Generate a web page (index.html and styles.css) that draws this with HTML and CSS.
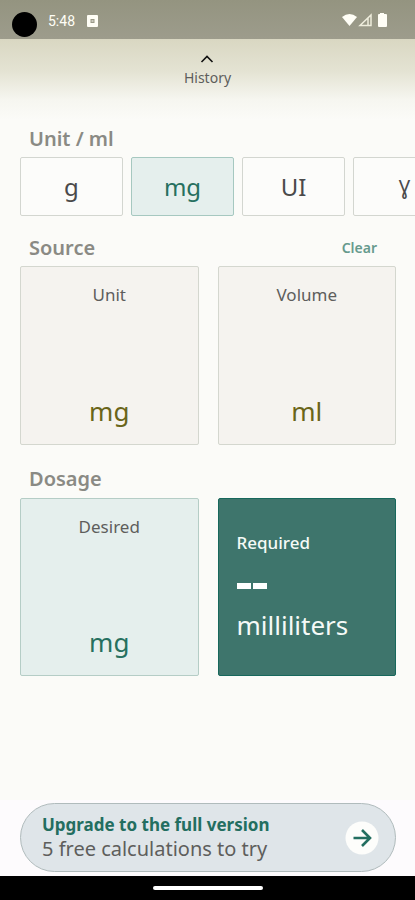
FILE: index.html
```html
<!DOCTYPE html>
<html lang="en">
<head>
<meta charset="utf-8">
<meta name="viewport" content="width=device-width, initial-scale=1">
<title>Dosage calculator</title>
<link rel="stylesheet" href="styles.css">
</head>
<body>
<div class="status">
  <span class="camera"></span>
  <span class="time">5:48</span>
  <svg class="notice" width="11" height="12" viewBox="0 0 11 12"><path fill="#fffef6" fill-rule="evenodd" d="M1 0h9a1 1 0 0 1 1 1v10a1 1 0 0 1-1 1H1a1 1 0 0 1-1-1V1a1 1 0 0 1 1-1zM3.500 4v4h4V4z"/><path fill="#fffef6" d="M4.500 5h2v2h-2z" opacity=".5"/></svg>
  <svg class="signals" width="46" height="15" viewBox="0 0 46 15"><path fill="#fffef6" d="M0 4Q7.500-2 15 4L7.500 13z"/><path fill="none" stroke="#eeeddc" stroke-width="1.500" d="M29 2v10.500H18zM26 5v7"/><path fill="#fffef6" d="M38 0h4v1h2q1 0 1 1v11q0 1-1 1h-7q-1 0-1-1V2q0-1 1-1h1z"/></svg>
</div>
<header class="header">
  <button class="history" type="button">
    <svg width="14" height="8" viewBox="0 0 14 8"><path fill="none" stroke="#111" stroke-width="1.600" d="M1.500 7 7 1.500 12.500 7"/></svg>
    <span>History</span>
  </button>
</header>
<main class="main">
  <section>
    <h2 class="title">Unit / ml</h2>
    <div class="chips">
      <button class="chip" type="button">g</button>
      <button class="chip selected" type="button" aria-pressed="true">mg</button>
      <button class="chip" type="button">UI</button>
      <button class="chip gamma" type="button">Ɣ</button>
    </div>
  </section>
  <section>
    <div class="title-row">
      <h2 class="title">Source</h2>
      <button class="clear" type="button">Clear</button>
    </div>
    <div class="cards">
      <button class="card" type="button"><span class="label">Unit</span><span class="unit">mg</span></button>
      <button class="card" type="button"><span class="label">Volume</span><span class="unit">ml</span></button>
    </div>
  </section>
  <section class="dosage">
    <h2 class="title">Dosage</h2>
    <div class="cards">
      <button class="card desired" type="button"><span class="label">Desired</span><span class="unit">mg</span></button>
      <div class="card required">
        <span class="required-label">Required</span>
        <span class="dashes" role="img" aria-label="No value"><i></i><i></i></span>
        <span class="required-unit">milliliters</span>
      </div>
    </div>
  </section>
</main>
<footer class="footer">
  <button class="upgrade" type="button">
    <span class="upgrade-text"><strong>Upgrade to the full version</strong><span>5 free calculations to try</span></span>
    <svg width="34" height="34" viewBox="0 0 34 34"><circle cx="17" cy="17" r="16.500" fill="#fdfdfb"/><path fill="none" stroke="#236e60" stroke-width="2.600" d="M8.500 17h16M17 9l8 8-8 8"/></svg>
  </button>
</footer>
<nav class="navbar"><span></span></nav>
</body>
</html>
```
FILE: styles.css
```css
* { box-sizing: border-box; }

body {
  margin: 0;
  min-height: 100vh;
  display: flex;
  flex-direction: column;
  overflow-x: hidden;
  background: #fbfbf8;
  color: #5e5e5c;
  font-family: "Noto Sans", sans-serif;
}

button {
  margin: 0;
  padding: 0;
  border: 0;
  background: none;
  color: inherit;
  font: inherit;
}

.status {
  height: 39px;
  display: flex;
  align-items: center;
  padding: 2px 27px 0 12px;
  background: linear-gradient(#949480, #9d9c8c);
}

.camera {
  width: 25px;
  height: 25px;
  margin: 8px 11px 0 0;
  border-radius: 50%;
  background: #000;
}

.time {
  margin-right: 12px;
  color: #fffef6;
  font: 14px/16px Roboto, sans-serif;
}

.signals { margin-left: auto; }

.header {
  height: 81px;
  display: flex;
  justify-content: center;
  align-items: flex-start;
  padding-top: 16px;
  background: linear-gradient(#d9d7c2, #e4e3d3 40%, #f6f6f0 75%, #fbfbf8);
}

.history {
  display: flex;
  flex-direction: column;
  align-items: center;
  gap: 7px;
  font-size: 14px;
  line-height: 16px;
}

.main {
  flex: 1;
  padding: 7px 19px 24px 20px;
}

.title {
  margin: 0;
  padding-left: 9px;
  color: #8a8a84;
  font-size: 20px;
  font-weight: 600;
  line-height: 24px;
}

.title-row {
  display: flex;
  justify-content: space-between;
  align-items: center;
  padding: 20px 19px 6px 0;
}

.clear {
  color: #669a8d;
  font-size: 14px;
  font-weight: 600;
  line-height: 20px;
}

.chips {
  display: flex;
  gap: 8px;
  margin: 6px -19px 0 0;
  overflow: hidden;
}

.chip {
  flex: 0 0 103px;
  height: 59px;
  border: 1px solid #d3d6d0;
  border-radius: 2px;
  background: #fcfcfa;
  color: #4a4a4a;
  font-size: 24px;
  line-height: 32px;
}

.chip.gamma { font-size: 20px; }

.chip.selected {
  border-color: #a6c8c0;
  background: #e5efed;
  color: #26705f;
}

.cards {
  display: grid;
  grid-template-columns: 1fr 1fr;
  gap: 19px;
}

.card {
  aspect-ratio: 1;
  display: flex;
  flex-direction: column;
  justify-content: space-between;
  align-items: center;
  padding: 16px 16px 15px;
  border: 1px solid #d4d7cf;
  border-radius: 2px;
  background: #f5f3ef;
}

.label {
  font-size: 17px;
  line-height: 24px;
}

.unit {
  color: #6a6519;
  font-size: 26px;
  line-height: 36px;
}

.dosage { padding-top: 22px; }
.dosage .cards { margin-top: 7px; }

.desired {
  border-color: #b5cdc6;
  background: #e5efed;
}

.desired .unit { color: #26705f; }

.required {
  justify-content: flex-start;
  align-items: flex-start;
  padding: 32px 18px;
  border-color: #17685c;
  background: #3e756c;
  color: #f5faf7;
}

.required-label {
  font-size: 17px;
  font-weight: 500;
  line-height: 24px;
}

.dashes {
  display: flex;
  gap: 2px;
  margin: 28px 0 18px;
}

.dashes i {
  width: 14px;
  height: 6px;
  background: #fff;
}

.required-unit {
  font-size: 26px;
  line-height: 36px;
}

.footer {
  padding: 3px 19px 4px 20px;
  background: #fdfbfd;
}

.upgrade {
  width: 100%;
  height: 69px;
  display: flex;
  justify-content: space-between;
  align-items: center;
  padding: 0 16px 0 21px;
  border: 1px solid #b0bbbc;
  border-radius: 35px;
  background: #dfe5e9;
  text-align: left;
}

.upgrade-text {
  display: flex;
  flex-direction: column;
  font-size: 20px;
  line-height: 26px;
}

.upgrade-text strong {
  color: #236e60;
  font-size: 17px;
  font-weight: 700;
  line-height: 22px;
}

.navbar {
  height: 24px;
  display: flex;
  justify-content: center;
  align-items: center;
  background: #000;
}

.navbar span {
  width: 110px;
  height: 4px;
  border-radius: 2px;
  background: #fff;
}
```
